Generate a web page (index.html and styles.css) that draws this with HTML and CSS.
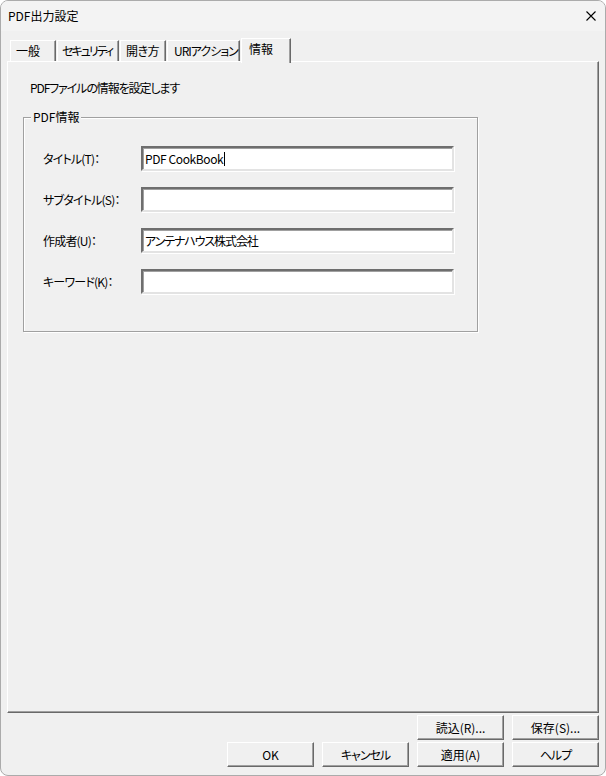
FILE: index.html
```html
<!DOCTYPE html>
<html lang="ja">
<head>
<meta charset="utf-8">
<title>PDF出力設定</title>
<link rel="stylesheet" href="styles.css">
</head>
<body>
<div class="window">
  <div class="titlebar">
    <span class="title">PDF出力設定</span>
    <svg class="close" width="10" height="10" viewBox="0 0 10 10"><path d="M0.5 0.5L9.5 9.5M9.5 0.5L0.5 9.5" stroke="#000" stroke-width="1.1" fill="none"/></svg>
  </div>
  <div class="content">
    <div class="tabs">
      <div class="tab tab-general">一般</div>
      <div class="tab tab-security">セキュリティ</div>
      <div class="tab tab-open">開き方</div>
      <div class="tab tab-uri">URIアクション</div>
      <div class="tab tab-info selected">情報</div>
    </div>
    <div class="panel">
      <p class="desc">PDFファイルの情報を設定します</p>
      <div class="group">
        <span class="group-label">PDF情報</span>
        <div class="row">
          <span class="label">タイトル(T)：</span>
          <div class="field field-en">PDF CookBook<span class="caret"></span></div>
        </div>
        <div class="row">
          <span class="label">サブタイトル(S)：</span>
          <div class="field"></div>
        </div>
        <div class="row">
          <span class="label">作成者(U)：</span>
          <div class="field field-ja">アンテナハウス株式会社</div>
        </div>
        <div class="row">
          <span class="label">キーワード(K)：</span>
          <div class="field"></div>
        </div>
      </div>
    </div>
    <div class="buttons">
      <div class="btn-row">
        <button class="btn">読込(R)...</button>
        <button class="btn">保存(S)...</button>
      </div>
      <div class="btn-row">
        <button class="btn">OK</button>
        <button class="btn btn-ja">キャンセル</button>
        <button class="btn">適用(A)</button>
        <button class="btn btn-ja">ヘルプ</button>
      </div>
    </div>
  </div>
</div>
</body>
</html>
```
FILE: styles.css
```css
* { box-sizing: border-box; }
html, body { margin: 0; padding: 0; background: #ffffff; }
body {
  font-family: "Noto Sans CJK JP", "Noto Sans", sans-serif;
  font-size: 12px;
  color: #000;
  font-feature-settings: "palt" 1;
}
.window {
  width: 606px;
  height: 776px;
  border: 1px solid #ababab;
  border-radius: 8px;
  background: #f0f0f0;
  overflow: hidden;
  display: flex;
  flex-direction: column;
}
.titlebar {
  height: 30px;
  flex: none;
  background: #f3f3f3;
  display: flex;
  align-items: center;
  justify-content: space-between;
  padding: 0 9px 0 7px;
}
.title { font-size: 12px; line-height: 16px; }
.close { display: block; }
.content {
  flex: 1;
  display: flex;
  flex-direction: column;
  padding: 7px 6px 0 6px;
}
.tabs {
  display: flex;
  align-items: flex-end;
  height: 23px;
  padding-left: 3px;
  gap: 1px;
  position: relative;
  z-index: 1;
}
.tab {
  height: 21px;
  line-height: 19px;
  padding-left: 5px;
  background: #f0f0f0;
  border-left: 1px solid #ffffff;
  border-top: 1px solid #ffffff;
  border-right: 1px solid #696969;
  box-shadow: inset -1px 0 0 #a0a0a0;
  white-space: nowrap;
  overflow: hidden;
  letter-spacing: -1px;
}
.tab.selected {
  height: 25px;
  margin-bottom: -2px;
  line-height: 19px;
  padding-left: 7px;
  letter-spacing: 0;
}
.tab-general { width: 46px; letter-spacing: 0; }
.tab-security { width: 62px; padding-left: 4px; letter-spacing: -2px; }
.tab-open { width: 46px; letter-spacing: -0.5px; }
.tab-uri { width: 73px; padding-left: 6px; }
.tab-info { width: 50px; }
.panel {
  height: 652px;
  flex: none;
  border-top: 1px solid #ffffff;
  border-left: 1px solid #ffffff;
  border-right: 1px solid #696969;
  border-bottom: 1px solid #696969;
  box-shadow: inset -1px -1px 0 #a0a0a0;
  padding: 18px 0 0 0;
}
.desc {
  margin: 0 0 0 22px;
  line-height: 16px;
  letter-spacing: -1.1px;
}
.group {
  position: relative;
  margin: 21px 0 0 15px;
  width: 455px;
  height: 215px;
  border: 1px solid #a0a0a0;
  box-shadow: inset 1px 1px 0 #ffffff, 1px 1px 0 #ffffff;
  padding: 28px 0 0 19px;
  display: flex;
  flex-direction: column;
  gap: 16px;
}
.group-label {
  position: absolute;
  top: -9px;
  left: 7px;
  padding: 0 2px;
  background: #f0f0f0;
  line-height: 16px;
}
.row {
  display: flex;
  align-items: center;
  height: 25px;
}
.label {
  width: 98px;
  flex: none;
  line-height: 16px;
  letter-spacing: -0.8px;
}
.field {
  width: 313px;
  height: 25px;
  background: #ffffff;
  border-top: 2px solid #6e6e6e;
  border-left: 2px solid #6e6e6e;
  border-right: 2px solid #e3e3e3;
  border-bottom: 2px solid #e3e3e3;
  box-shadow: inset 1px 1px 0 #a0a0a0, 1px 1px 0 #ffffff;
  padding: 0 0 0 2px;
  line-height: 20px;
  display: flex;
  align-items: center;
  white-space: nowrap;
}
.field-en { letter-spacing: -0.4px; }
.field-ja { letter-spacing: -1.1px; }
.caret {
  display: inline-block;
  width: 1px;
  height: 14px;
  background: #000;
  margin-left: 1px;
}
.buttons {
  padding-top: 2px;
  display: flex;
  flex-direction: column;
  gap: 2px;
}
.btn-row {
  display: flex;
  justify-content: flex-end;
  gap: 8px;
}
.btn {
  width: 87px;
  height: 25px;
  margin: 0;
  padding: 0;
  font: inherit;
  color: #000;
  background: #f0f0f0;
  border-top: 1px solid #ffffff;
  border-left: 1px solid #ffffff;
  border-right: 1px solid #696969;
  border-bottom: 1px solid #696969;
  box-shadow: inset -1px -1px 0 #a0a0a0;
  line-height: 22px;
  text-align: center;
}
.btn-ja { letter-spacing: -1px; }
```
